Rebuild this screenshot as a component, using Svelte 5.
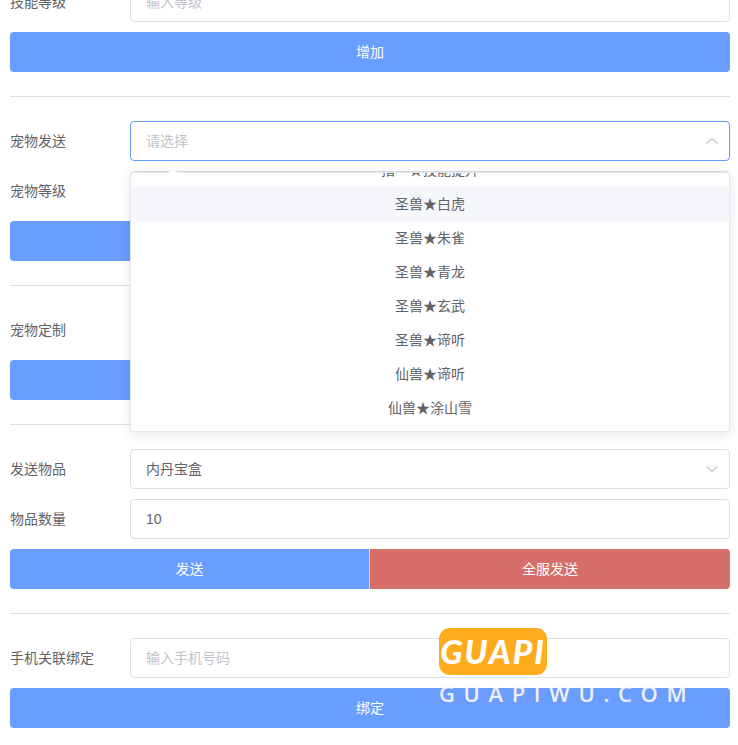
<script lang="ts">
	const petOptions = [
		'指一★技能提升',
		'圣兽★白虎',
		'圣兽★朱雀',
		'圣兽★青龙',
		'圣兽★玄武',
		'圣兽★谛听',
		'仙兽★谛听',
		'仙兽★涂山雪'
	];
	let hovered = $state(1);
</script>

<div class="page">
	<div class="row">
		<span class="label">技能等级</span>
		<div class="field"><span class="placeholder">输入等级</span></div>
	</div>
	<button class="btn">增加</button>
	<hr />

	<div class="row">
		<span class="label">宠物发送</span>
		<div class="field select focus">
			<span class="placeholder">请选择</span>
			<svg class="caret" viewBox="0 0 12 6" width="12" height="6">
				<path d="M.5 5.5 6 .5l5.5 5" fill="none" stroke="#c0c4cc" stroke-width="1.1" />
			</svg>
			<div class="popper">
				<span class="arrow"></span>
				<ul class="options">
					{#each petOptions as opt, i}
						<li class:hover={i === hovered}>{opt}</li>
					{/each}
				</ul>
			</div>
		</div>
	</div>
	<div class="row">
		<span class="label">宠物等级</span>
		<div class="field"><span class="placeholder">输入等级</span></div>
	</div>
	<button class="btn">发送</button>
	<hr />

	<div class="row">
		<span class="label">宠物定制</span>
		<div class="field"><span class="placeholder">请输入</span></div>
	</div>
	<button class="btn">定制</button>
	<hr />

	<div class="row">
		<span class="label">发送物品</span>
		<div class="field select">
			<span class="text">内丹宝盒</span>
			<svg class="caret" viewBox="0 0 12 6" width="12" height="6">
				<path d="M.5 .5 6 5.5l5.5-5" fill="none" stroke="#c0c4cc" stroke-width="1.1" />
			</svg>
		</div>
	</div>
	<div class="row">
		<span class="label">物品数量</span>
		<div class="field"><span>10</span></div>
	</div>
	<div class="btn-group">
		<button class="btn">发送</button>
		<button class="btn danger">全服发送</button>
	</div>
	<hr />

	<div class="row">
		<span class="label">手机关联绑定</span>
		<div class="field"><span class="placeholder">输入手机号码</span></div>
	</div>
	<button class="btn">绑定</button>
</div>

<div class="watermark">
	<div class="badge">GUAPI</div>
	<div class="site">GUAPIWU.COM</div>
</div>

<style>
	:global(body) {
		margin: 0;
		background: #fff;
		overflow: hidden;
	}

	.page {
		width: 720px;
		margin: -18px 8px 0 10px;
		font-family: "Liberation Sans", "Noto Sans CJK SC", sans-serif;
		font-size: 14px;
		color: #606266;
	}

	.row {
		display: flex;
		align-items: center;
		height: 40px;
		margin-bottom: 10px;
	}

	.label {
		width: 120px;
		flex-shrink: 0;
		padding-bottom: 2px;
	}

	.field {
		flex: 1;
		height: 40px;
		box-sizing: border-box;
		border: 1px solid #dcdfe6;
		border-radius: 4px;
		padding: 0 15px;
		display: flex;
		align-items: center;
		justify-content: space-between;
		background: #fff;
		position: relative;
	}

	.field.focus {
		border-color: #669cff;
	}

	.placeholder {
		color: #c0c4cc;
		padding-bottom: 2px;
	}

	.text {
		padding-bottom: 2px;
	}

	.caret {
		margin-right: -4px;
		flex-shrink: 0;
	}

	.btn {
		display: block;
		width: 100%;
		height: 40px;
		border: none;
		border-radius: 4px;
		background: #699dff;
		color: #fff;
		font: inherit;
		padding: 0 0 2px;
	}

	.btn-group {
		display: flex;
	}

	.btn-group .btn {
		flex: 0 0 50%;
		border-radius: 4px 0 0 4px;
		border-right: 1px solid #d7d9e4;
	}

	.btn-group .danger {
		background: #d66f69;
		border-right: none;
		border-radius: 0 4px 4px 0;
	}

	hr {
		border: none;
		border-top: 1px solid #dcdfe6;
		margin: 24px 0;
	}

	.popper {
		position: absolute;
		z-index: 5;
		top: 50px;
		left: -1px;
		right: -1px;
		height: 260px;
		box-sizing: border-box;
		border: 1px solid #e4e7ed;
		border-radius: 4px;
		background: #fff;
		box-shadow: 0 2px 12px rgba(0, 0, 0, 0.1);
	}

	.arrow {
		position: absolute;
		top: -4px;
		left: 36px;
		width: 0;
		height: 0;
		border-left: 6px solid transparent;
		border-right: 6px solid transparent;
		border-bottom: 5px solid #fff;
	}

	.options {
		list-style: none;
		margin: 0;
		padding: 0;
		height: 258px;
		overflow: hidden;
		border-radius: 4px;
	}

	.options li {
		height: 34px;
		line-height: 34px;
		text-align: center;
	}

	.options li:first-child {
		margin-top: -20px;
	}

	.options li.hover {
		background: #f5f7fa;
	}

	.watermark {
		position: absolute;
		z-index: 10;
		left: 439px;
		top: 628px;
		font-family: "Open Sans", sans-serif;
		color: #fff;
	}

	.badge {
		width: 108px;
		height: 47px;
		border-radius: 11px;
		background: #ffab1e;
		font-family: "Lato", sans-serif;
		font-weight: 900;
		font-style: italic;
		font-size: 33px;
		line-height: 46px;
		letter-spacing: 2px;
		text-align: center;
	}

	.site {
		margin-top: 6px;
		font-size: 22px;
		line-height: 24px;
		font-weight: 600;
		letter-spacing: 8.6px;
		white-space: nowrap;
		opacity: 0.85;
		text-shadow: 0 0 1px rgba(225, 120, 150, 0.5);
	}
</style>
